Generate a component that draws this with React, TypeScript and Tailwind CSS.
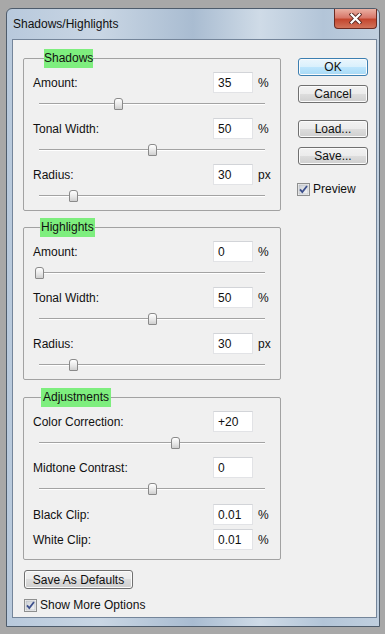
import React from "react";

type Row = {
  label: string;
  value: string;
  unit?: string;
  thumb?: number; // centre x of the slider thumb, in page pixels
};

const groups: { title: string; legend: string; rows: Row[] }[] = [
  {
    title: "Shadows",
    legend: "ml-[11px] px-0",
    rows: [
      { label: "Amount:", value: "35", unit: "%", thumb: 118 },
      { label: "Tonal Width:", value: "50", unit: "%", thumb: 152 },
      { label: "Radius:", value: "30", unit: "px", thumb: 73 },
    ],
  },
  {
    title: "Highlights",
    legend: "ml-[7px] px-[1px]",
    rows: [
      { label: "Amount:", value: "0", unit: "%", thumb: 39 },
      { label: "Tonal Width:", value: "50", unit: "%", thumb: 152 },
      { label: "Radius:", value: "30", unit: "px", thumb: 73 },
    ],
  },
];

function Field({ label, value, unit }: Row) {
  return (
    <div className="flex h-[21px] items-center">
      <span className="w-[180px]">{label}</span>
      <input
        readOnly
        defaultValue={value}
        className="h-[21px] w-[40px] border border-[#e2e3e6] border-t-[#d2d4d8] bg-white px-[4px] text-[12px] text-[#101010] outline-none"
      />
      {unit && <span className="ml-[5px]">{unit}</span>}
    </div>
  );
}

function Slider({ thumb }: { thumb: number }) {
  return (
    <div className="relative h-[25px] pt-[10px]">
      <div className="ml-[6px] h-[2px] w-[226px] border-t border-[#a3a3a3] bg-white" />
      <div
        className="absolute top-[5px] h-[12px] w-[9px] rounded-t-[3px] rounded-b-[1px] border border-[#8a8a8a] bg-[linear-gradient(#ffffff,#e6e6e6_60%,#cfcfcf)]"
        style={{ left: thumb - 33 - 4.5 }}
      />
    </div>
  );
}

function Group({ title, legend, children, className = "" }: { title: string; legend: string; children: React.ReactNode; className?: string }) {
  return (
    <fieldset className={`w-[258px] rounded-[2px] border border-[#a2a2a2] pl-[9px] pt-[4px] ${className}`}>
      <legend className={`bg-[#7eee7e] leading-[19px] ${legend}`}>{title}</legend>
      {children}
    </fieldset>
  );
}

function Button({ label, primary = false, className = "" }: { label: string; primary?: boolean; className?: string }) {
  return (
    <button
      className={`flex h-[18px] items-center justify-center rounded-[3px] border text-[12px] leading-none text-[#101010] shadow-[inset_0_0_0_1px_#fbfbfb] ${
        primary
          ? "border-[#3c7fb1] bg-[linear-gradient(#eaf6fd_0%,#d9f0fc_50%,#bee6fd_50%,#a7d9f5_100%)]"
          : "border-[#707070] bg-[linear-gradient(#f2f2f2_0%,#ebebeb_50%,#dddddd_50%,#cfcfcf_100%)]"
      } ${className}`}
    >
      {label}
    </button>
  );
}

function Check({ label, className = "" }: { label: string; className?: string }) {
  return (
    <div className={`flex h-[14px] items-center ${className}`}>
      <svg width="13" height="13" viewBox="0 0 13 13" className="shrink-0">
        <defs>
          <linearGradient id="cb" x1="0" y1="0" x2="1" y2="1">
            <stop offset="0" stopColor="#cbcfd5" />
            <stop offset="1" stopColor="#f6f6f6" />
          </linearGradient>
        </defs>
        <rect x="0.5" y="0.5" width="12" height="12" fill="#f4f4f4" stroke="#8e8f8f" />
        <rect x="2" y="2" width="9" height="9" fill="url(#cb)" stroke="#b0b4bb" strokeWidth="0.6" />
        <path d="M3 6.3 L5.3 9 L10 3" fill="none" stroke="#3c4f8c" strokeWidth="1.8" />
      </svg>
      <span className="ml-[3px]">{label}</span>
    </div>
  );
}

export default function App() {
  return (
    <div className="h-[634px] w-[385px] overflow-hidden bg-[#a8a8a8] pb-[7px] pl-[6px] pr-[5px] pt-[8px] font-['Liberation_Sans',Arial,sans-serif] text-[12px] text-[#101010]">
      <div className="flex h-full flex-col rounded-t-[6px] border border-[#4e5c6c] bg-[linear-gradient(to_right,#b8c9dc,#c9d6e4_25%,#a9bcd1_50%,#cfdbe7_68%,#b3c5d8_85%,#c0cfdf)]">
        <div className="flex h-[30px] justify-between">
          <span className="self-center pl-[6px] text-[12px] text-[#111]">Shadows/Highlights</span>
          <div className="mr-[2px] flex h-[20px] w-[43px] items-center justify-center rounded-b-[4px] border border-t-0 border-[#6b2b22] bg-[linear-gradient(#eab0a3,#d8786a_45%,#c4472f_55%,#d1735a)]">
            <svg width="13" height="11" viewBox="0 0 13 11">
              <path d="M2.5 1.5 L10.5 9.5 M10.5 1.5 L2.5 9.5" stroke="#5a2a24" strokeWidth="4" strokeLinecap="square" />
              <path d="M2.5 1.5 L10.5 9.5 M10.5 1.5 L2.5 9.5" stroke="#ffffff" strokeWidth="2.2" strokeLinecap="square" />
            </svg>
          </div>
        </div>

        <div className="mb-[8px] ml-[5px] mr-[2px] flex flex-1 gap-[17px] border border-[#74859a] bg-[#f0f0f0] pl-[10px] pt-[9px]">
          <div className="flex w-[258px] flex-col">
            {groups.map((g, i) => (
              <Group key={g.title} title={g.title} legend={g.legend} className={i > 0 ? "mt-[7px]" : ""}>
                {g.rows.map((r) => (
                  <div key={r.label}>
                    <Field {...r} />
                    <Slider thumb={r.thumb ?? 0} />
                  </div>
                ))}
              </Group>
            ))}

            <Group title="Adjustments" legend="ml-[8px] px-[2px]" className="mt-[8px] pb-[9px]">
              <Field label="Color Correction:" value="+20" />
              <Slider thumb={175} />
              <Field label="Midtone Contrast:" value="0" />
              <Slider thumb={152} />
              <div className="mt-[1px]">
                <Field label="Black Clip:" value="0.01" unit="%" />
              </div>
              <div className="mt-[4px]">
                <Field label="White Clip:" value="0.01" unit="%" />
              </div>
            </Group>

            <Button label="Save As Defaults" className="ml-[1px] mt-[10px] h-[19px] w-[109px]" />
            <Check label="Show More Options" className="ml-[1px] mt-[9px]" />
          </div>

          <div className="flex w-[70px] flex-col pt-[9px]">
            <Button label="OK" primary />
            <Button label="Cancel" className="mt-[9px]" />
            <Button label="Load..." className="mt-[17px]" />
            <Button label="Save..." className="mt-[9px]" />
            <Check label="Preview" className="-ml-[1px] mt-[17px]" />
          </div>
        </div>
      </div>
    </div>
  );
}
